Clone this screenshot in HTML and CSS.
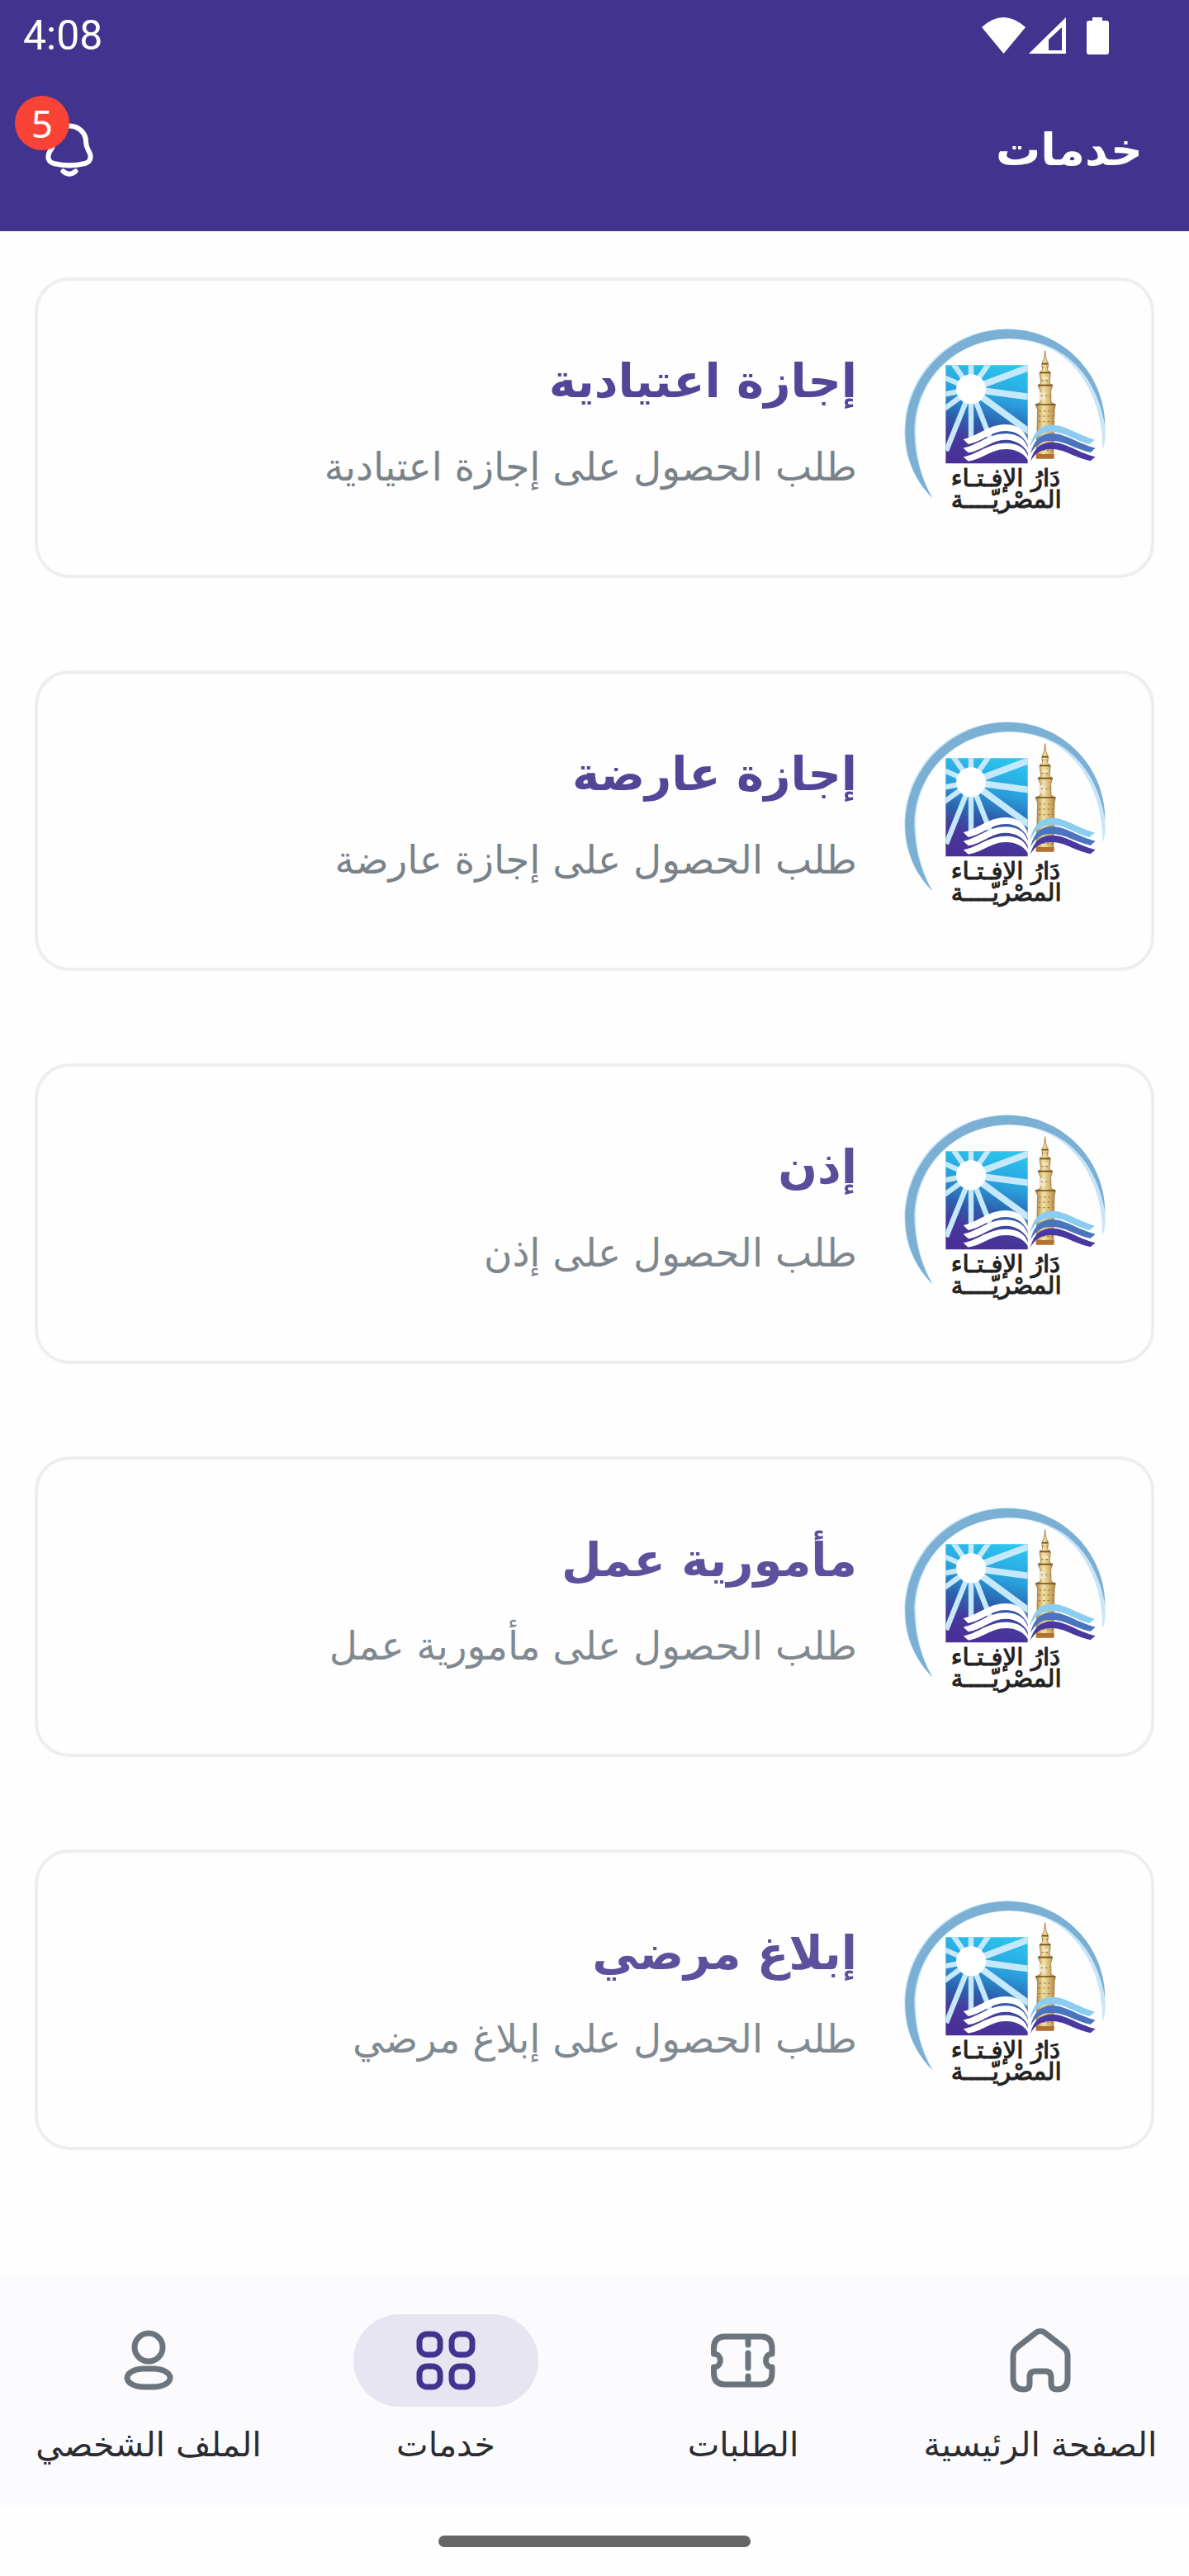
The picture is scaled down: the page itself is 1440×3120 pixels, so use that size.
FILE: index.html
```html
<!DOCTYPE html>
<html lang="ar" dir="rtl">
<head>
    <meta charset="UTF-8">
    <meta name="viewport" content="width=device-width, initial-scale=1.0">
    <title>خدمات</title>
    <link rel="stylesheet" href="styles.css">
</head>
<body>
    <!-- shared logo, reused by every card -->
    <svg class="defs" aria-hidden="true">
        <defs>
            <linearGradient id="sky" x1="0.7" y1="0" x2="0.5" y2="1">
                <stop offset="0" stop-color="#2cc4ee"/>
                <stop offset="0.35" stop-color="#2a9fdc"/>
                <stop offset="0.6" stop-color="#2b62ae"/>
                <stop offset="0.8" stop-color="#463a9c"/>
                <stop offset="1" stop-color="#4a2f96"/>
            </linearGradient>
            <linearGradient id="stone" x1="0" y1="0" x2="1" y2="0">
                <stop offset="0" stop-color="#a97f35"/>
                <stop offset="0.4" stop-color="#f3e2a4"/>
                <stop offset="1" stop-color="#b5863c"/>
            </linearGradient>
            <clipPath id="frame"><path d="M254 219H552V576H254Z"/></clipPath>
            <symbol id="logo" viewBox="100 80 738 684">
                <path fill="#c9e6f8" d="M202 698C145 640 104 560 104 462C104 250 270 87 476 87C680 87 834 250 834 462C834 490 832 508 824 526C826 300 690 120 480 124C290 126 146 270 146 462C146 550 165 630 208 702Z"/>
                <path fill="#7bb0d4" d="M204 700C145 640 107 560 107 462C110 250 280 88 480 88C690 90 834 260 833 440C800 250 680 124 482 122C280 126 140 280 140 462C142 550 165 630 204 700Z"/>
                <path fill="url(#sky)" d="M254 219H552V576H254Z"/>
                <g clip-path="url(#frame)" stroke="#c5e9fa" fill="none">
                    <path stroke-width="19" d="M346 306V210M346 306L276 206M346 306L416 206M346 306L240 260M346 306L240 326M346 306L240 384M346 306L256 530M346 306V500M346 306L414 480"/>
                    <path stroke-width="24" d="M346 306L570 222M346 306L570 336M346 306L570 470"/>
                </g>
                <circle cx="346" cy="306" r="54" fill="#fff"/>
                <path fill="url(#stone)" stroke="#8a6428" stroke-width="2" d="M615 166L619 196L627 214L624 236L635 246L631 284L642 292L636 312L637 354L653 362L649 380L645 558H583L588 380L580 362L598 354V312L589 292L600 284L595 246L606 236L603 214L611 196Z"/>
                <path stroke="#6d4c1d" stroke-width="5" fill="none" d="M604 214H626M596 246H634M590 292H642M581 362H653"/>
                <path stroke="#efe6cf" stroke-width="9" fill="none" d="M606 266H626M602 318V346M612 318V346"/>
                <path stroke="#8f6b2c" stroke-width="3" stroke-dasharray="7 9" fill="none" d="M594 386H644M592 404H644M592 424H644M600 330H636M602 274H632M604 226H626M590 528H644"/>
                <path fill="#b5702e" d="M583 542H648V558H583Z"/>
                <!-- open book, left pages -->
                <path fill="#fff" d="M318 488C370 478 410 434 470 434C530 434 556 474 558 524C546 484 516 458 472 458C420 458 390 496 336 506Z"/>
                <path fill="#fff" d="M318 520C370 510 410 468 470 468C530 468 554 500 558 548C544 514 514 490 472 490C420 490 390 528 336 537Z"/>
                <path fill="#fff" d="M318 552C370 542 410 502 470 502C530 502 552 530 558 572C542 542 514 524 472 524C420 524 390 560 336 568Z"/>
                <!-- right pages -->
                <path fill="#8bcdf0" d="M560 518C572 460 600 436 640 436C690 436 730 470 796 490L776 506C716 490 690 464 642 462C604 460 578 478 560 518Z"/>
                <path fill="#4b74bf" d="M562 542C574 488 602 467 640 467C690 467 730 502 798 520L780 536C716 520 690 496 642 494C604 492 580 508 562 542Z"/>
                <path fill="#4838a0" d="M562 568C574 518 602 499 640 499C690 499 730 534 798 552L780 567C716 552 690 526 642 524C604 522 580 536 562 568Z"/>
                <text class="logo-text" x="472" y="660" font-size="88" text-anchor="middle">دَارُ الإفـتـاء</text>
                <text class="logo-text" x="474" y="738" font-size="88" text-anchor="middle">المصْريّــــة</text>
            </symbol>
        </defs>
    </svg>

    <header class="header">
        <div class="status" dir="ltr">
            <span>4:08</span>
            <svg class="status-icons" viewBox="0 0 156 48" aria-hidden="true">
                <path fill="#fff" d="M1 14Q27 -10 54 14L27.500 46Z"/>
                <path fill="#fff" fill-rule="evenodd" d="M58 46L103 2V46ZM82 29V42H98V14Z"/>
                <path fill="#fff" d="M135 2H147V6H152Q155 6 155 9V44Q155 47 152 47H131Q128 47 128 44V9Q128 6 131 6H135Z"/>
            </svg>
        </div>
        <div class="app-bar">
            <h1>خدمات</h1>
            <button class="bell" type="button" aria-label="الإشعارات">
                <svg viewBox="0 0 72 76" aria-hidden="true">
                    <path d="M36 8.500C25 8.500 17 17 17 27C17 34 14 36 12 40C9 46 10 52 17 54C29 57 43 57 55 54C62 52 63 46 60 40C58 36 56 34 56 27C56 17 47 8.500 36 8.500Z"/>
                    <path d="M28.500 63.500Q36 70 43.500 63.500"/>
                </svg>
                <span class="badge">5</span>
            </button>
        </div>
    </header>

    <main class="services">
        <a class="card" href="#">
            <svg class="logo"><use href="#logo"/></svg>
            <div class="card-text">
                <h2>إجازة اعتيادية</h2>
                <p>طلب الحصول على إجازة اعتيادية</p>
            </div>
        </a>
        <a class="card" href="#">
            <svg class="logo"><use href="#logo"/></svg>
            <div class="card-text">
                <h2>إجازة عارضة</h2>
                <p>طلب الحصول على إجازة عارضة</p>
            </div>
        </a>
        <a class="card" href="#">
            <svg class="logo"><use href="#logo"/></svg>
            <div class="card-text">
                <h2>إذن</h2>
                <p>طلب الحصول على إذن</p>
            </div>
        </a>
        <a class="card" href="#">
            <svg class="logo"><use href="#logo"/></svg>
            <div class="card-text">
                <h2>مأمورية عمل</h2>
                <p>طلب الحصول على مأمورية عمل</p>
            </div>
        </a>
        <a class="card" href="#">
            <svg class="logo"><use href="#logo"/></svg>
            <div class="card-text">
                <h2>إبلاغ مرضي</h2>
                <p>طلب الحصول على إبلاغ مرضي</p>
            </div>
        </a>
    </main>

    <nav class="nav">
        <a class="nav-item" href="#">
            <span class="pill">
                <svg viewBox="0 0 84 84" aria-hidden="true">
                    <path d="M42 6.500Q45 6.500 47 8L70 26Q75 30 75 36V64Q75 77 62 77Q55 77 55 70V62Q55 55 48 55H36Q29 55 29 62V70Q29 77 22 77Q9 77 9 64V36Q9 30 14 26L37 8Q39 6.500 42 6.500Z"/>
                </svg>
            </span>
            <span>الصفحة الرئيسية</span>
        </a>
        <a class="nav-item" href="#">
            <span class="pill">
                <svg viewBox="0 0 84 84" aria-hidden="true">
                    <path d="M6.500 34V27Q6.500 13 20 13H64Q77 13 77 27V34C67 34 67 50 77 50V57Q77 71 64 71H20Q6.500 71 6.500 57V50C17 50 17 34 6.500 34ZM48 14V23M48 33V51M48 61V70"/>
                </svg>
            </span>
            <span>الطلبات</span>
        </a>
        <a class="nav-item active" href="#" aria-current="page">
            <span class="pill">
                <svg viewBox="0 0 84 84" aria-hidden="true">
                    <rect x="10" y="10" width="25" height="25" rx="9"/>
                    <rect x="49" y="10" width="25" height="25" rx="9"/>
                    <rect x="10" y="49" width="25" height="25" rx="9"/>
                    <rect x="49" y="49" width="25" height="25" rx="9"/>
                </svg>
            </span>
            <span>خدمات</span>
        </a>
        <a class="nav-item" href="#">
            <span class="pill">
                <svg viewBox="0 0 84 84" aria-hidden="true">
                    <circle cx="42" cy="26" r="17"/>
                    <rect x="16" y="52" width="52" height="22" rx="20" ry="11"/>
                </svg>
            </span>
            <span>الملف الشخصي</span>
        </a>
    </nav>
    <div class="gesture"></div>
</body>
</html>
```
FILE: styles.css
```css
* {
    box-sizing: border-box;
}

body {
    margin: 0;
    min-height: 100vh;
    display: flex;
    flex-direction: column;
    background-color: #fefefe;
    font-family: "DejaVu Sans", sans-serif;
}

h1, h2, p {
    margin: 0;
}

.defs {
    position: absolute;
    width: 0;
    height: 0;
}

.header {
    background-color: #41338e;
    color: white;
}

.status {
    display: flex;
    justify-content: space-between;
    align-items: center;
    height: 88px;
    padding: 0 96px 2px 28px;
    font-family: Roboto, sans-serif;
    font-size: 50px;
}

.status-icons {
    width: 156px;
    height: 48px;
}

.app-bar {
    display: flex;
    justify-content: space-between;
    align-items: center;
    height: 192px;
    padding: 0 56px 4px 48px;
}

.app-bar h1 {
    font-size: 54px;
    line-height: 80px;
}

.bell {
    position: relative;
    width: 72px;
    height: 76px;
    padding: 0;
    border: none;
    background: none;
    cursor: pointer;
}

.bell svg {
    display: block;
    fill: none;
    stroke: white;
    stroke-width: 6;
    stroke-linecap: round;
}

.badge {
    position: absolute;
    top: -28px;
    left: -30px;
    width: 66px;
    height: 66px;
    border-radius: 50%;
    background-color: #f94336;
    color: white;
    font: 46px/66px "Noto Sans", sans-serif;
    text-align: center;
}

.services {
    flex: 1;
    display: flex;
    flex-direction: column;
    gap: 112px;
    padding: 56px 42px;
}

.card {
    display: flex;
    gap: 56px;
    padding: 56px 54px 72px;
    border: 4px solid #eeeeee;
    border-radius: 42px;
    text-decoration: none;
}

.logo {
    flex: none;
    width: 246px;
    height: 228px;
}

.logo-text {
    fill: #222;
    stroke: #222;
    stroke-width: 3;
    font-family: "DejaVu Sans", sans-serif;
}

.card-text {
    padding-top: 14px;
    opacity: 0.9;
}

.card:nth-child(n+3) .card-text {
    opacity: 0.87;
}

.card:nth-child(n+4) .card-text {
    opacity: 0.85;
}

.card h2 {
    color: #41338e;
    font-size: 56px;
    line-height: 104px;
}

.card p {
    color: #6c757d;
    font-size: 47px;
    line-height: 104px;
}

.nav {
    display: grid;
    grid-template-columns: repeat(4, 1fr);
    height: 280px;
    padding-top: 47px;
    background-color: #fbfbfe;
}

.nav-item {
    display: flex;
    flex-direction: column;
    align-items: center;
    color: #2c2b31;
    font-size: 41px;
    line-height: 92px;
    text-decoration: none;
    white-space: nowrap;
}

.pill {
    display: flex;
    justify-content: center;
    align-items: center;
    width: 224px;
    height: 112px;
    border-radius: 56px;
}

.pill svg {
    width: 84px;
    height: 84px;
    fill: none;
    stroke: #6c757d;
    stroke-width: 7;
    stroke-linecap: round;
    stroke-linejoin: round;
}

.active .pill {
    background-color: #e7e5f2;
}

.active svg {
    stroke: #41338e;
}

.gesture {
    height: 84px;
    padding-top: 35px;
}

.gesture::before {
    content: "";
    display: block;
    width: 378px;
    height: 14px;
    margin: 0 auto;
    border-radius: 7px;
    background-color: #666;
}
```
